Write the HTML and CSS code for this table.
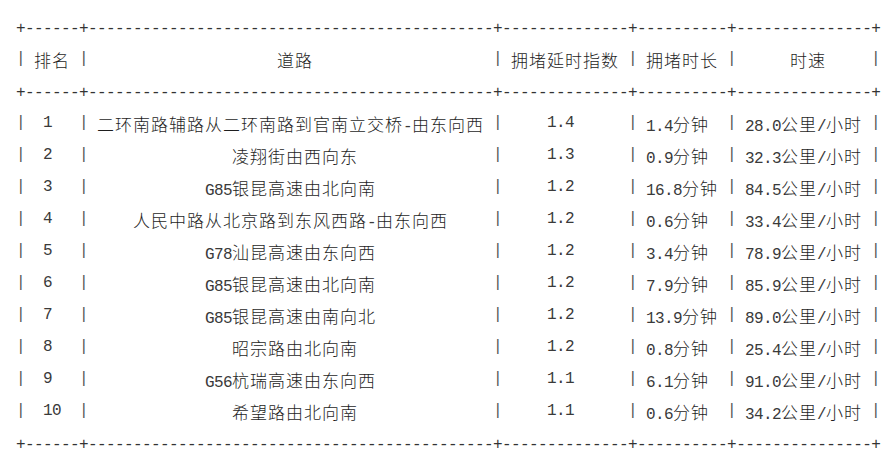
FILE: index.html
```html
<!DOCTYPE html>
<html lang="zh-CN">
<head>
<meta charset="utf-8">
<title>拥堵道路排名</title>
<link rel="stylesheet" href="styles.css">
</head>
<body>
<div class="table">
  <div class="rule">+------+---------------------------------------------+--------------+----------+---------------+</div>
  <div class="row"><span class="bar">|</span><span class="cell c1"><span class="h">排名</span></span><span class="bar">|</span><span class="cell c2 sr"><span class="h">道路</span></span><span class="bar">|</span><span class="cell c3"><span class="h">拥堵延时指数</span></span><span class="bar">|</span><span class="cell c4"><span class="h">拥堵时长</span></span><span class="bar">|</span><span class="cell c5 sr"><span class="h">时速</span></span><span class="bar">|</span></div>
  <div class="rule">+------+---------------------------------------------+--------------+----------+---------------+</div>

  <div class="row"><span class="bar">|</span><span class="cell c1 sl">1</span><span class="bar">|</span><span class="cell c2"><span class="h">二环南路辅路从二环南路到官南立交桥</span>-<span class="h">由东向西</span></span><span class="bar">|</span><span class="cell c3 sl">1.4</span><span class="bar">|</span><span class="cell c4 sl">1.4<span class="h">分钟</span></span><span class="bar">|</span><span class="cell c5">28.0<span class="h">公里</span>/<span class="h">小时</span></span><span class="bar">|</span></div>
  <div class="row"><span class="bar">|</span><span class="cell c1 sl">2</span><span class="bar">|</span><span class="cell c2 sr"><span class="h">凌翔街由西向东</span></span><span class="bar">|</span><span class="cell c3 sl">1.3</span><span class="bar">|</span><span class="cell c4 sl">0.9<span class="h">分钟</span></span><span class="bar">|</span><span class="cell c5">32.3<span class="h">公里</span>/<span class="h">小时</span></span><span class="bar">|</span></div>
  <div class="row"><span class="bar">|</span><span class="cell c1 sl">3</span><span class="bar">|</span><span class="cell c2">G85<span class="h">银昆高速由北向南</span></span><span class="bar">|</span><span class="cell c3 sl">1.2</span><span class="bar">|</span><span class="cell c4">16.8<span class="h">分钟</span></span><span class="bar">|</span><span class="cell c5">84.5<span class="h">公里</span>/<span class="h">小时</span></span><span class="bar">|</span></div>
  <div class="row"><span class="bar">|</span><span class="cell c1 sl">4</span><span class="bar">|</span><span class="cell c2"><span class="h">人民中路从北京路到东风西路</span>-<span class="h">由东向西</span></span><span class="bar">|</span><span class="cell c3 sl">1.2</span><span class="bar">|</span><span class="cell c4 sl">0.6<span class="h">分钟</span></span><span class="bar">|</span><span class="cell c5">33.4<span class="h">公里</span>/<span class="h">小时</span></span><span class="bar">|</span></div>
  <div class="row"><span class="bar">|</span><span class="cell c1 sl">5</span><span class="bar">|</span><span class="cell c2">G78<span class="h">汕昆高速由东向西</span></span><span class="bar">|</span><span class="cell c3 sl">1.2</span><span class="bar">|</span><span class="cell c4 sl">3.4<span class="h">分钟</span></span><span class="bar">|</span><span class="cell c5">78.9<span class="h">公里</span>/<span class="h">小时</span></span><span class="bar">|</span></div>
  <div class="row"><span class="bar">|</span><span class="cell c1 sl">6</span><span class="bar">|</span><span class="cell c2">G85<span class="h">银昆高速由北向南</span></span><span class="bar">|</span><span class="cell c3 sl">1.2</span><span class="bar">|</span><span class="cell c4 sl">7.9<span class="h">分钟</span></span><span class="bar">|</span><span class="cell c5">85.9<span class="h">公里</span>/<span class="h">小时</span></span><span class="bar">|</span></div>
  <div class="row"><span class="bar">|</span><span class="cell c1 sl">7</span><span class="bar">|</span><span class="cell c2">G85<span class="h">银昆高速由南向北</span></span><span class="bar">|</span><span class="cell c3 sl">1.2</span><span class="bar">|</span><span class="cell c4">13.9<span class="h">分钟</span></span><span class="bar">|</span><span class="cell c5">89.0<span class="h">公里</span>/<span class="h">小时</span></span><span class="bar">|</span></div>
  <div class="row"><span class="bar">|</span><span class="cell c1 sl">8</span><span class="bar">|</span><span class="cell c2 sr"><span class="h">昭宗路由北向南</span></span><span class="bar">|</span><span class="cell c3 sl">1.2</span><span class="bar">|</span><span class="cell c4 sl">0.8<span class="h">分钟</span></span><span class="bar">|</span><span class="cell c5">25.4<span class="h">公里</span>/<span class="h">小时</span></span><span class="bar">|</span></div>
  <div class="row"><span class="bar">|</span><span class="cell c1 sl">9</span><span class="bar">|</span><span class="cell c2">G56<span class="h">杭瑞高速由东向西</span></span><span class="bar">|</span><span class="cell c3 sl">1.1</span><span class="bar">|</span><span class="cell c4 sl">6.1<span class="h">分钟</span></span><span class="bar">|</span><span class="cell c5">91.0<span class="h">公里</span>/<span class="h">小时</span></span><span class="bar">|</span></div>
  <div class="row"><span class="bar">|</span><span class="cell c1">10</span><span class="bar">|</span><span class="cell c2 sr"><span class="h">希望路由北向南</span></span><span class="bar">|</span><span class="cell c3 sl">1.1</span><span class="bar">|</span><span class="cell c4 sl">0.6<span class="h">分钟</span></span><span class="bar">|</span><span class="cell c5">34.2<span class="h">公里</span>/<span class="h">小时</span></span><span class="bar">|</span></div>
  <div class="rule">+------+---------------------------------------------+--------------+----------+---------------+</div>
</div>
</body>
</html>
```

FILE: styles.css
```css
html, body {
  margin: 0;
  background: #ffffff;
}

body {
  padding: 11px 0 0 16px;
  color: #3a3a3a;
  font-family: "Liberation Mono", "Noto Sans CJK SC", monospace;
  font-size: 16px;
  letter-spacing: -0.6px;
}

.table {
  display: flex;
  flex-direction: column;
  width: 864px;
}

.rule {
  box-sizing: border-box;
  height: 32px;
  padding-top: 4px;
  line-height: 28px;
  white-space: pre;
  color: #333333;
}

.row {
  display: flex;
  box-sizing: border-box;
  height: 32px;
  padding-top: 1px;
  line-height: 31px;
}

.bar {
  flex: none;
  width: 9px;
  text-align: center;
  color: #555555;
}

.cell {
  flex: none;
  box-sizing: border-box;
  text-align: center;
  white-space: pre;
}

.c1 { width: 54px; }
.c2 { width: 405px; }
.c3 { width: 126px; }
.c4 { width: 90px; }
.c5 { width: 135px; }

/* prettytable puts the odd leftover column on one side */
.sl { padding-right: 9px; }
.sr { padding-left: 9px; }

.h {
  font-family: "Noto Sans CJK SC", sans-serif;
  font-size: 17px;
  font-weight: 300;
  letter-spacing: 1px;
  color: #1e1e1e;
}
```
